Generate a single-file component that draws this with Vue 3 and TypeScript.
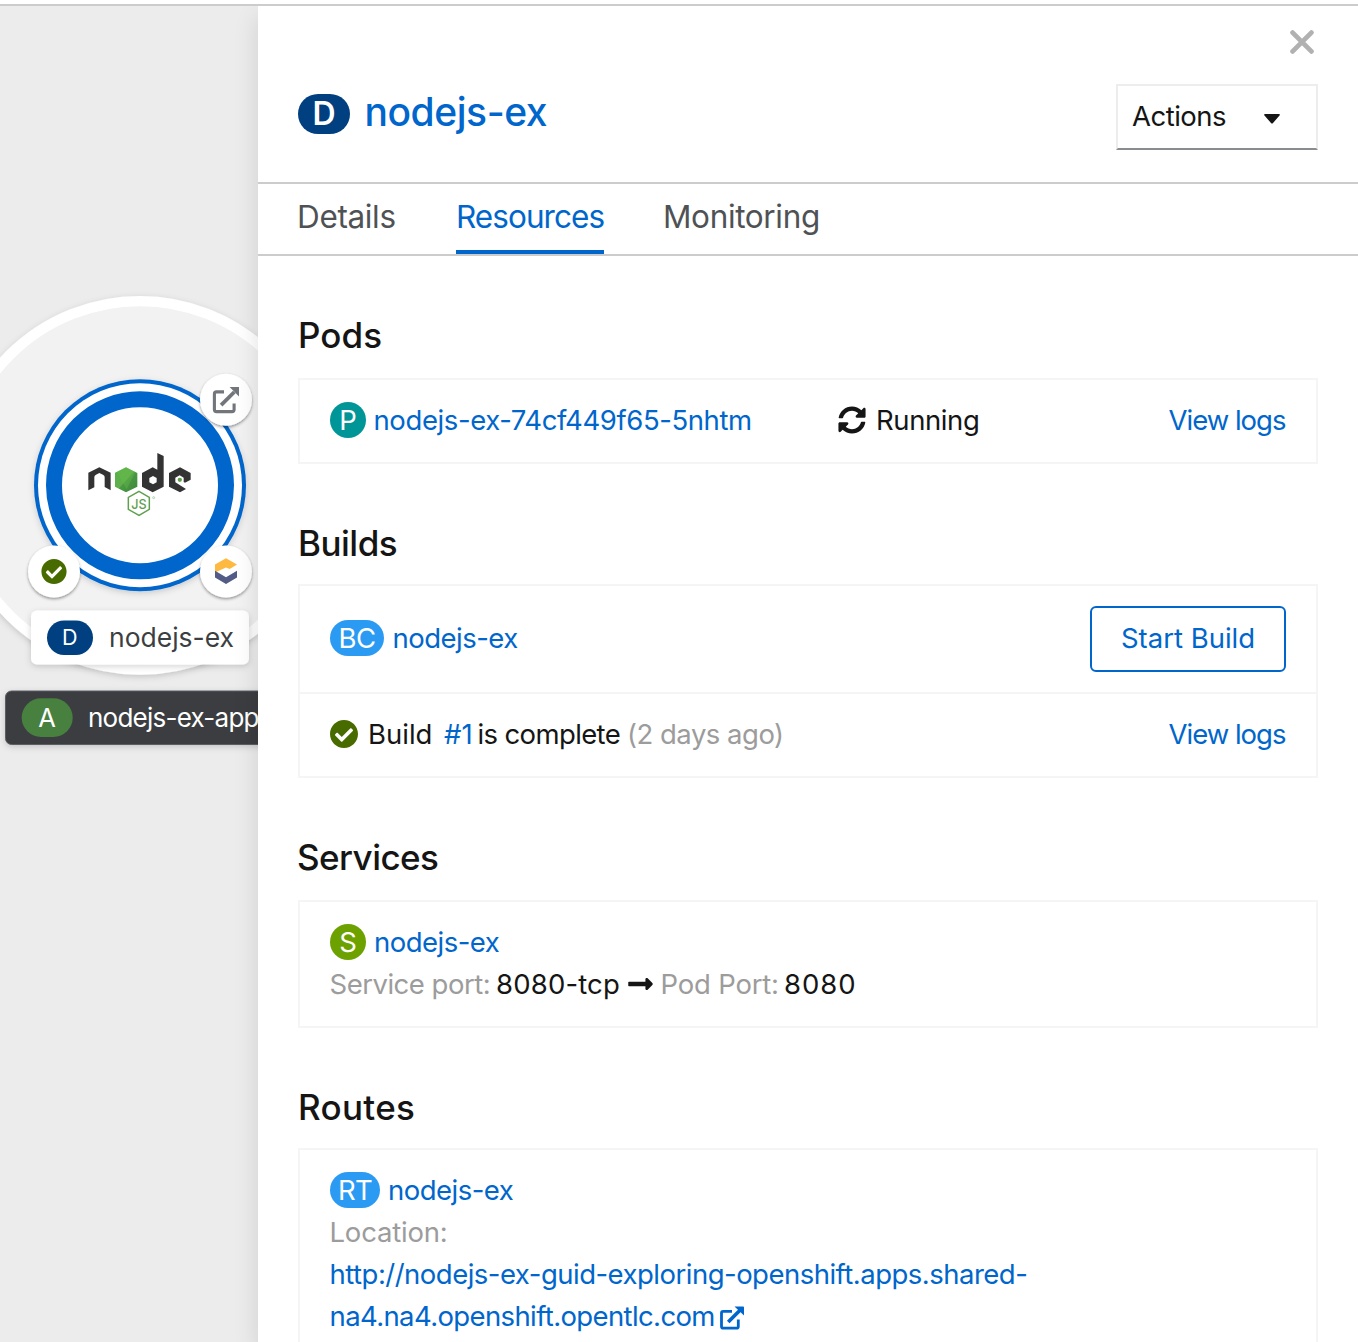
<script setup lang="ts">
interface Tab {
  id: string
  label: string
  active?: boolean
}

const tabs: Tab[] = [
  { id: 'details', label: 'Details' },
  { id: 'resources', label: 'Resources', active: true },
  { id: 'monitoring', label: 'Monitoring' },
]

const checkPath =
  'M504 256c0 136.967-111.033 248-248 248S8 392.967 8 256 119.033 8 256 8s248 111.033 248 248zM227.314 387.314l184-184c6.248-6.248 6.248-16.379 0-22.627l-22.627-22.627c-6.248-6.249-16.379-6.249-22.628 0L216 308.118l-70.059-70.059c-6.248-6.248-16.379-6.248-22.628 0l-22.627 22.627c-6.248 6.248-6.248 16.379 0 22.627l104 104c6.249 6.249 16.379 6.249 22.628.001z'
const syncPath =
  'M370.72 133.28C339.458 104.008 298.888 87.962 255.848 88c-77.458.068-144.328 53.178-162.791 126.85-1.344 5.363-6.122 9.15-11.651 9.15H24.103c-7.498 0-13.194-6.807-11.807-14.176C33.933 94.924 134.813 8 256 8c66.448 0 126.791 26.136 171.315 68.685L463.03 40.97C478.149 25.851 504 36.559 504 57.941V192c0 13.255-10.745 24-24 24H345.941c-21.382 0-32.09-25.851-16.971-40.971l41.75-41.749zM32 296h134.059c21.382 0 32.09 25.851 16.971 40.971l-41.75 41.75c31.262 29.273 71.835 45.319 114.876 45.28 77.418-.07 144.315-53.144 162.787-126.849 1.344-5.363 6.122-9.15 11.651-9.15h57.304c7.498 0 13.194 6.807 11.807 14.176C478.067 417.076 377.187 504 256 504c-66.448 0-126.791-26.136-171.315-68.685L48.97 471.03C33.851 486.149 8 475.441 8 454.059V320c0-13.255 10.745-24 24-24z'
const arrowPath =
  'M313.941 216H12c-6.627 0-12 5.373-12 12v56c0 6.627 5.373 12 12 12h301.941v46.059c0 21.382 25.851 32.09 40.971 16.971l86.059-86.059c9.373-9.373 9.373-24.569 0-33.941l-86.059-86.059c-15.119-15.119-40.971-4.411-40.971 16.971V216z'
</script>

<template>
  <div class="page">
    <aside class="canvas">
      <svg class="topology" width="258" height="1336" viewBox="0 6 258 1336">
        <defs>
          <filter id="soft" x="-20%" y="-20%" width="140%" height="150%">
            <feDropShadow dx="0" dy="2" stdDeviation="3" flood-color="#030303" flood-opacity="0.17" />
          </filter>
          <filter id="lift" x="-30%" y="-30%" width="160%" height="170%">
            <feDropShadow dx="0" dy="1.5" stdDeviation="1.6" flood-color="#030303" flood-opacity="0.42" />
          </filter>
          <linearGradient id="leaf" x1="0" y1="0" x2="1" y2="1">
            <stop offset="0" stop-color="#56b146" />
            <stop offset="0.5" stop-color="#5fb04c" />
            <stop offset="0.52" stop-color="#4a9a43" />
            <stop offset="1" stop-color="#3e863d" />
          </linearGradient>
        </defs>

        <circle cx="140" cy="485.3" r="184.2" fill="#f2f2f2" stroke="#fff" stroke-width="10.4" filter="url(#soft)" />

        <g filter="url(#soft)">
          <circle cx="140" cy="485.3" r="106" fill="#06c" />
        </g>
        <circle cx="140" cy="485.3" r="102" fill="#fff" />
        <circle cx="140" cy="485.3" r="86" fill="none" stroke="#06c" stroke-width="16" />

        <g transform="translate(70 440) scale(0.33333)">
          <path d="M55 98 88 82 122 98V151L104 141V111Q104 106 99 104L88 99 78 104Q73 106 73 111V142L55 151Z" fill="#333" />
          <path d="M135 98 168 82 202 99V140L168 157 135 140Z" fill="url(#leaf)" />
          <path d="M141 96 168 82 196 96 170 148Z" fill="#6cc04a" opacity="0.35" />
          <path fill-rule="evenodd" d="M216 99 248 82 262 89V39L281 48V140L248 157 216 140ZM238 114V127L249 133 260 127V114L249 108Z" fill="#333" />
          <path d="M297 99 330 82 362 99V119L345 128 341 126V113L329 106 316 113V127L348 147 330 157 297 140Z" fill="#333" />
          <circle cx="329.500" cy="119.500" r="6.500" fill="#5fa04e" />
          <path d="M207 154 238 172V208L207 226 175 208V172Z" fill="none" stroke="#5fa04e" stroke-width="4.500" />
          <text x="184" y="206" font-size="39" font-weight="500" textLength="46" lengthAdjust="spacingAndGlyphs" fill="#5fa04e">JS</text>
          <circle cx="251" cy="173" r="3" fill="none" stroke="#8fbf83" stroke-width="2" />
        </g>

        <g filter="url(#lift)">
          <circle cx="226" cy="399.700" r="26" fill="#fff" />
          <circle cx="54" cy="571.500" r="26" fill="#fff" />
          <circle cx="226" cy="571.500" r="26" fill="#fff" />
        </g>
        <g transform="translate(212.800 387)">
          <path d="M11.200 4.900H3.700Q1.600 4.900 1.600 7V22.500Q1.600 24.600 3.700 24.600H19.200Q21.300 24.600 21.300 22.500V16.400" fill="none" stroke="#72767b" stroke-width="3.100" />
          <path d="M8.300 18.200 21.500 5" fill="none" stroke="#72767b" stroke-width="3.800" />
          <path d="M16.800 0H26.200V9.400Z" fill="#72767b" />
        </g>
        <svg x="41" y="558.500" width="26" height="26" viewBox="0 0 512 512"><path :d="checkPath" fill="#486b00" /></svg>
        <path d="M215 564.500 226 558.300 237 564.500 229.700 569 226 567.400 215 572.500Z" fill="#fdb940" />
        <path d="M215 570.800 226 577.300 237 570.800V577.600L226 584 215 577.600Z" fill="#525c86" />

        <rect x="31" y="610.500" width="218" height="54" rx="6" fill="#fff" filter="url(#soft)" />
        <rect x="47" y="620.500" width="46" height="34.500" rx="17" fill="#004080" />
        <text x="62" y="645" font-size="21.500" fill="#fff">D</text>
        <text x="109" y="647" font-size="26.500" textLength="125" fill="#3c3f42">nodejs-ex</text>

        <rect x="5.500" y="691" width="300" height="53.500" rx="6" fill="#3a3e41" stroke="#5b5f62" stroke-width="1" filter="url(#soft)" />
        <rect x="21.700" y="698.300" width="51" height="38.700" rx="19.300" fill="#47803f" />
        <text x="38.300" y="726.700" font-size="25.500" fill="#fff">A</text>
        <text x="88" y="727" font-size="26" textLength="171.500" fill="#fff">nodejs-ex-app</text>
      </svg>
    </aside>

    <main class="panel">
      <header class="head">
        <div class="close-row">
          <svg width="24" height="24" viewBox="0 0 24 24" class="close">
            <path d="M2.600 2.600 21.400 21.400M21.400 2.600 2.600 21.400" />
          </svg>
        </div>
        <div class="title-row">
          <span class="badge big">D</span>
          <a class="title">nodejs-ex</a>
          <button class="actions">
            <span class="actions-text">Actions</span>
            <svg width="16" height="10" viewBox="0 0 16 10"><path d="M1 0H15Q16.600 .4 15.300 1.800L9 8.900Q8 9.900 7 8.900L.7 1.800Q-.6 .4 1 0Z" fill="#151515" /></svg>
          </button>
        </div>
      </header>

      <nav class="tabs">
        <a v-for="t in tabs" :key="t.id" class="tab" :class="[t.id, { active: t.active }]">
          <span>{{ t.label }}</span>
        </a>
      </nav>

      <section class="section">
        <h2 class="pods-h">Pods</h2>
        <div class="card">
          <div class="row pod-row">
            <span class="badge pod">P</span>
            <a class="pod-name">nodejs-ex-74cf449f65-5nhtm</a>
            <svg class="sync" width="28" height="28" viewBox="0 0 512 512"><path :d="syncPath" fill="#151515" /></svg>
            <span class="running">Running</span>
            <a class="logs">View logs</a>
          </div>
        </div>
      </section>

      <section class="section">
        <h2 class="tight builds-h">Builds</h2>
        <div class="card">
          <div class="row config-row">
            <span class="badge bc">BC</span>
            <a class="name">nodejs-ex</a>
            <button class="start">Start Build</button>
          </div>
          <div class="row build-row">
            <svg width="28" height="28" viewBox="8 8 496 496"><path :d="checkPath" fill="#486b00" /></svg>
            <span class="b1">Build</span>
            <a class="b2">#1</a>
            <span class="b3">is complete</span>
            <span class="b4">(2 days ago)</span>
            <a class="logs">View logs</a>
          </div>
        </div>
      </section>

      <section class="section">
        <h2 class="services-h">Services</h2>
        <div class="card stack service">
          <div class="line">
            <span class="badge svc">S</span>
            <a class="name">nodejs-ex</a>
          </div>
          <div class="line">
            <span class="s1">Service port:</span>
            <span class="s2">8080-tcp</span>
            <svg class="arrow" width="25" height="28" viewBox="0 0 448 512"><path :d="arrowPath" fill="#151515" /></svg>
            <span class="s3">Pod Port:</span>
            <span class="s4">8080</span>
          </div>
        </div>
      </section>

      <section class="section">
        <h2 class="tight routes-h">Routes</h2>
        <div class="card stack">
          <div class="line">
            <span class="badge rt">RT</span>
            <a class="name">nodejs-ex</a>
          </div>
          <div class="line"><span class="loc">Location:</span></div>
          <div class="line"><a class="url1">http://nodejs-ex-guid-exploring-openshift.apps.shared-</a></div>
          <div class="line">
            <a class="url2">na4.na4.openshift.opentlc.com</a>
            <svg class="ext" width="24" height="24" viewBox="0 0 24 24">
              <path d="M12 5.400H3.200Q1.500 5.400 1.500 7.100V20.500Q1.500 22.200 3.200 22.200H16.600Q18.300 22.200 18.300 20.500V13.500" fill="none" stroke="#06c" stroke-width="2.800" />
              <path d="M8.200 16 20 4.200" fill="none" stroke="#06c" stroke-width="3.600" />
              <path d="M14.500 .6H23.200Q24 .6 24 1.400V9.600Z" fill="#06c" />
            </svg>
          </div>
        </div>
      </section>
    </main>
  </div>
</template>

<style>
body {
  overflow: hidden;
}
</style>

<style scoped>
.page {
  box-sizing: border-box;
  display: flex;
  width: 1358px;
  height: 1342px;
  padding-top: 6px;
  overflow: hidden;
  background: linear-gradient(#fff 4px, #ccc 4px, #ccc 6px, #fff 6px);
  color: #151515;
  font-family: Inter, "Liberation Sans", sans-serif;
  font-size: 27.5px;
  line-height: 42px;
}
.canvas {
  flex: 0 0 258px;
  height: 1336px;
  overflow: hidden;
  background: #ececec;
}
.topology {
  display: block;
}
.panel {
  flex: 0 0 1100px;
  height: 1336px;
  background: #fff;
  box-shadow: 0 10px 24px rgba(3, 3, 3, 0.12);
  clip-path: inset(0 0 0 -60px);
  z-index: 1;
}
a {
  color: #06c;
}
a,
span {
  white-space: nowrap;
}
button {
  padding: 0;
  background: #fff;
  font: inherit;
}
.head {
  display: flex;
  flex-direction: column;
  height: 176px;
  border-bottom: 2px solid #ccc;
}
.close-row {
  display: flex;
  justify-content: flex-end;
  height: 78px;
  padding: 24px 44px 0 0;
  box-sizing: border-box;
}
.close path {
  fill: none;
  stroke: #b1b1b1;
  stroke-width: 4.8;
  stroke-linecap: round;
}
.title-row {
  display: flex;
  padding: 0 40px;
}
.badge {
  display: flex;
  flex: none;
  align-items: center;
  justify-content: center;
  height: 36px;
  border-radius: 18px;
  color: #fff;
}
.big {
  width: 52px;
  height: 40px;
  margin-top: 10px;
  border-radius: 20px;
  background: #004080;
  font-size: 32px;
  font-weight: 600;
}
.title {
  margin: 7px 0 0 14.500px;
  font-size: 39px;
  font-weight: 500;
  letter-spacing: -0.45px;
}
.actions {
  display: flex;
  align-items: center;
  box-sizing: border-box;
  width: 202px;
  height: 66px;
  margin-left: auto;
  padding: 0 36px 0 14px;
  justify-content: space-between;
  border: 2px solid #ededed;
  border-bottom-color: #8a8d90;
  color: #151515;
  letter-spacing: -0.5px;
}
.actions-text {
  margin-top: -2px;
}
.actions svg {
  margin-top: 3px;
}
.tabs {
  display: flex;
  height: 70px;
  padding-left: 40px;
  border-bottom: 2px solid #ccc;
  font-size: 31.5px;
}
.tab {
  box-sizing: border-box;
  height: 70px;
  padding-top: 12px;
  border-bottom: 4px solid transparent;
  color: #4f5255;
}
.tab.details {
  width: 98px;
  margin-right: 60px;
  letter-spacing: -0.35px;
}
.tab.details span {
  margin-left: -1px;
}
.tab.resources {
  width: 148px;
  margin-right: 58px;
  letter-spacing: -0.95px;
}
.tab.monitoring {
  margin-left: 1px;
  letter-spacing: -0.35px;
}
.tab.active {
  border-bottom-color: #06c;
  color: #06c;
}
.section {
  padding: 59px 40px 1px;
}
.section + .section {
  padding-top: 58px;
}
h2 {
  height: 63px;
  margin: 0;
  font-size: 35px;
  font-weight: 500;
  line-height: 40px;
}
.section + .section h2 {
  height: 63px;
}
.section + .section h2.tight {
  height: 61px;
}
.pods-h {
  letter-spacing: 0.1px;
}
.builds-h {
  letter-spacing: -0.5px;
}
.services-h {
  margin-left: -1px;
  letter-spacing: -0.56px;
}
.routes-h {
  letter-spacing: 0.3px;
}
.card {
  box-sizing: border-box;
  border: 2px solid #f5f5f5;
}
.row {
  display: flex;
  align-items: center;
  box-sizing: border-box;
  padding: 0 30px 2px;
}
.row + .row {
  border-top: 2px solid #f5f5f5;
}
.pod-row {
  height: 82px;
}
.build-row {
  height: 84px;
}
.config-row {
  height: 106px;
}
.pod {
  width: 36px;
  background: #009596;
}
.bc {
  width: 54px;
  background: #2b9af3;
  letter-spacing: -0.5px;
}
.svc {
  width: 36px;
  background: #6ca100;
}
.rt {
  width: 50px;
  background: #2b9af3;
  letter-spacing: -0.6px;
}
.pod-name {
  width: 464.500px;
  margin-left: 7.500px;
  letter-spacing: -0.4px;
}
.running {
  margin-left: 10px;
  letter-spacing: -0.4px;
}
.logs {
  margin-left: auto;
  margin-right: 0.500px;
  letter-spacing: -1px;
}
.name {
  margin-left: 8px;
  letter-spacing: -0.52px;
}
.bc + .name {
  margin-left: 8.500px;
}
.start {
  box-sizing: border-box;
  width: 196px;
  height: 66px;
  margin-top: 2px;
  margin-left: auto;
  padding-bottom: 2px;
  border: 2px solid #06c;
  border-radius: 6px;
  color: #06c;
}
.b1 {
  width: 76px;
  margin-left: 10px;
  letter-spacing: 0;
}
.b2 {
  width: 33.500px;
  letter-spacing: 0;
}
.b3 {
  width: 149.500px;
  letter-spacing: -0.63px;
}
.b4 {
  color: #9c9c9c;
  letter-spacing: -0.5px;
}
.stack {
  padding: 19px 30px;
}
.service {
  height: 128px;
}
.line {
  display: flex;
  align-items: center;
  height: 42px;
}
.s1 {
  width: 166.500px;
  margin-left: -0.500px;
  color: #9c9c9c;
  letter-spacing: -0.5px;
}
.s2 {
  width: 131.500px;
  letter-spacing: 0.17px;
}
.s3 {
  width: 123.500px;
  margin-left: 8px;
  color: #9c9c9c;
  letter-spacing: -0.2px;
}
.s4 {
  letter-spacing: 1px;
}
.loc {
  margin-left: -0.500px;
  color: #9c9c9c;
  letter-spacing: -0.2px;
}
.url1 {
  margin-left: -0.500px;
  letter-spacing: -0.51px;
}
.url2 {
  width: 389px;
  margin-left: -0.500px;
  letter-spacing: -0.62px;
}
.ext {
  margin-left: 1px;
  margin-top: 3px;
}
</style>
